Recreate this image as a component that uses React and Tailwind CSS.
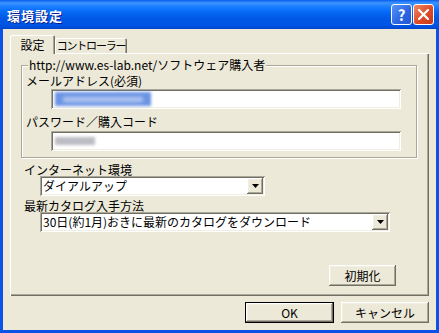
import React from "react";

const font = "font-['Noto_Sans_CJK_JP',sans-serif]";
const raised =
  "shadow-[inset_-1px_-1px_#716f64,inset_1px_1px_#fff,inset_-2px_-2px_#aca899,inset_2px_2px_#f1efe2]";
const sunken =
  "shadow-[inset_1px_1px_#aca899,inset_-1px_-1px_#fff,inset_2px_2px_#716f64,inset_-2px_-2px_#f1efe2]";

function Combo({ width, value }) {
  return (
    <div className={`${width} h-[20px] ml-[30px] bg-white ${sunken} flex items-center p-[2px]`}>
      <span className="flex-1 pl-[1px] leading-[14px] text-black whitespace-nowrap">{value}</span>
      <div className={`w-[16px] h-[16px] bg-[#ece9d8] ${raised} flex items-center justify-center`}>
        <svg width="7" height="4" viewBox="0 0 7 4">
          <path d="M0 0h7L3.5 4z" fill="#000" />
        </svg>
      </div>
    </div>
  );
}

function Field({ children }) {
  return (
    <div className={`w-[350px] h-[20px] ml-[25px] bg-white ${sunken} flex items-center pl-[4px]`}>
      {children}
    </div>
  );
}

export default function App() {
  return (
    <div className={`w-[439px] h-[333px] bg-[#0b53e6] flex flex-col ${font} text-[12px] text-black`}>
      {/* タイトルバー */}
      <div className="h-[29px] shrink-0 flex items-center pl-[7px] pr-[5px] bg-[linear-gradient(to_bottom,#0a5cea_0%,#3d93ff_10%,#2083ff_20%,#0a70fb_35%,#0262ee_50%,#0058e6_65%,#0054e3_85%,#0050de_93%,#0043c8_100%)]">
        <span className="text-white font-bold text-[13px] tracking-[1px] pt-[2px] [text-shadow:1px_1px_#0a1e8c]">
          環境設定
        </span>
        <div className="ml-auto flex gap-[1px]">
          <div className="w-[21px] h-[21px] rounded-[3px] border border-white bg-[linear-gradient(to_bottom_right,#5c94f8,#2a64e2_60%,#2458d6)] flex items-center justify-center text-white font-bold text-[15px] leading-none">
            ?
          </div>
          <div className="w-[21px] h-[21px] rounded-[3px] border border-white bg-[linear-gradient(to_bottom_right,#f08a66,#de4a26_55%,#c8391a)] flex items-center justify-center">
            <svg width="11" height="11" viewBox="0 0 11 11">
              <path d="M1 1L10 10M10 1L1 10" stroke="#fff" strokeWidth="2.2" strokeLinecap="square" />
            </svg>
          </div>
        </div>
      </div>

      {/* 本体 */}
      <div className="flex-1 mx-[3px] mb-[3px] bg-[#ece9d8] pt-[6px] pl-[7px] pr-[7px] flex flex-col">
        <div className="h-[18px] flex items-start">
          <div className="relative z-10 h-[19px] w-[45px] bg-[#ece9d8] rounded-t-[2px] shadow-[inset_1px_1px_#fff,inset_-1px_0_#716f64,inset_-2px_0_#aca899] flex items-center justify-center pt-[1px]">
            設定
          </div>
          <div className="mt-[3px] h-[15px] w-[72px] rounded-t-[2px] shadow-[inset_1px_1px_#fff,inset_-1px_0_#716f64,inset_-2px_0_#aca899] flex items-center justify-center leading-[13px] whitespace-nowrap text-[11px] tracking-[-1.2px]">
            コントローラー
          </div>
        </div>

        <div className="h-[243px] w-[419px] shadow-[inset_1px_1px_#fff,inset_-1px_-1px_#716f64,inset_-2px_-2px_#aca899] pt-[12px] flex flex-col">
          <div className="relative ml-[11px] w-[396px] h-[93px] border border-[#aca899] shadow-[inset_1px_1px_#fff,1px_1px_#fff] pt-[8px] pl-[4px]">
            <span className="absolute top-[-8px] left-[6px] px-[1px] bg-[#ece9d8] leading-[14px] whitespace-nowrap">
              http://www.es-lab.net/ソフトウェア購入者
            </span>
            <div className="leading-[14px]">メールアドレス(必須)</div>
            <div className="mt-[1px]">
              <Field>
                <div className="w-[96px] h-[14px] bg-[#6a93e4] blur-[1.5px] flex items-center px-[8px]">
                  <div className="w-full h-[5px] bg-[#b6caf2] blur-[1.5px]" />
                </div>
              </Field>
            </div>
            <div className="mt-[6px] leading-[14px]">パスワード／購入コード</div>
            <div className="mt-[2px]">
              <Field>
                <div className="w-[40px] h-[8px] bg-[#bcbcc4] blur-[1.8px]" />
              </Field>
            </div>
          </div>

          <div className="mt-[6px] ml-[14px] leading-[12px]">インターネット環境</div>
          <Combo width="w-[225px]" value="ダイアルアップ" />
          <div className="mt-[4px] ml-[14px] leading-[12px]">最新カタログ入手方法</div>
          <Combo width="w-[350px]" value="30日(約1月)おきに最新のカタログをダウンロード" />

          <div className={`mt-[33px] self-end mr-[33px] w-[67px] h-[21px] ${raised} flex items-center justify-center`}>
            初期化
          </div>
        </div>

        <div className="mt-[6px] flex justify-end gap-[7px]">
          <div className={`w-[89px] h-[21px] border border-black ${raised} flex items-center justify-center`}>
            OK
          </div>
          <div className={`w-[88px] h-[21px] ${raised} flex items-center justify-center`}>
            キャンセル
          </div>
        </div>
      </div>
    </div>
  );
}
